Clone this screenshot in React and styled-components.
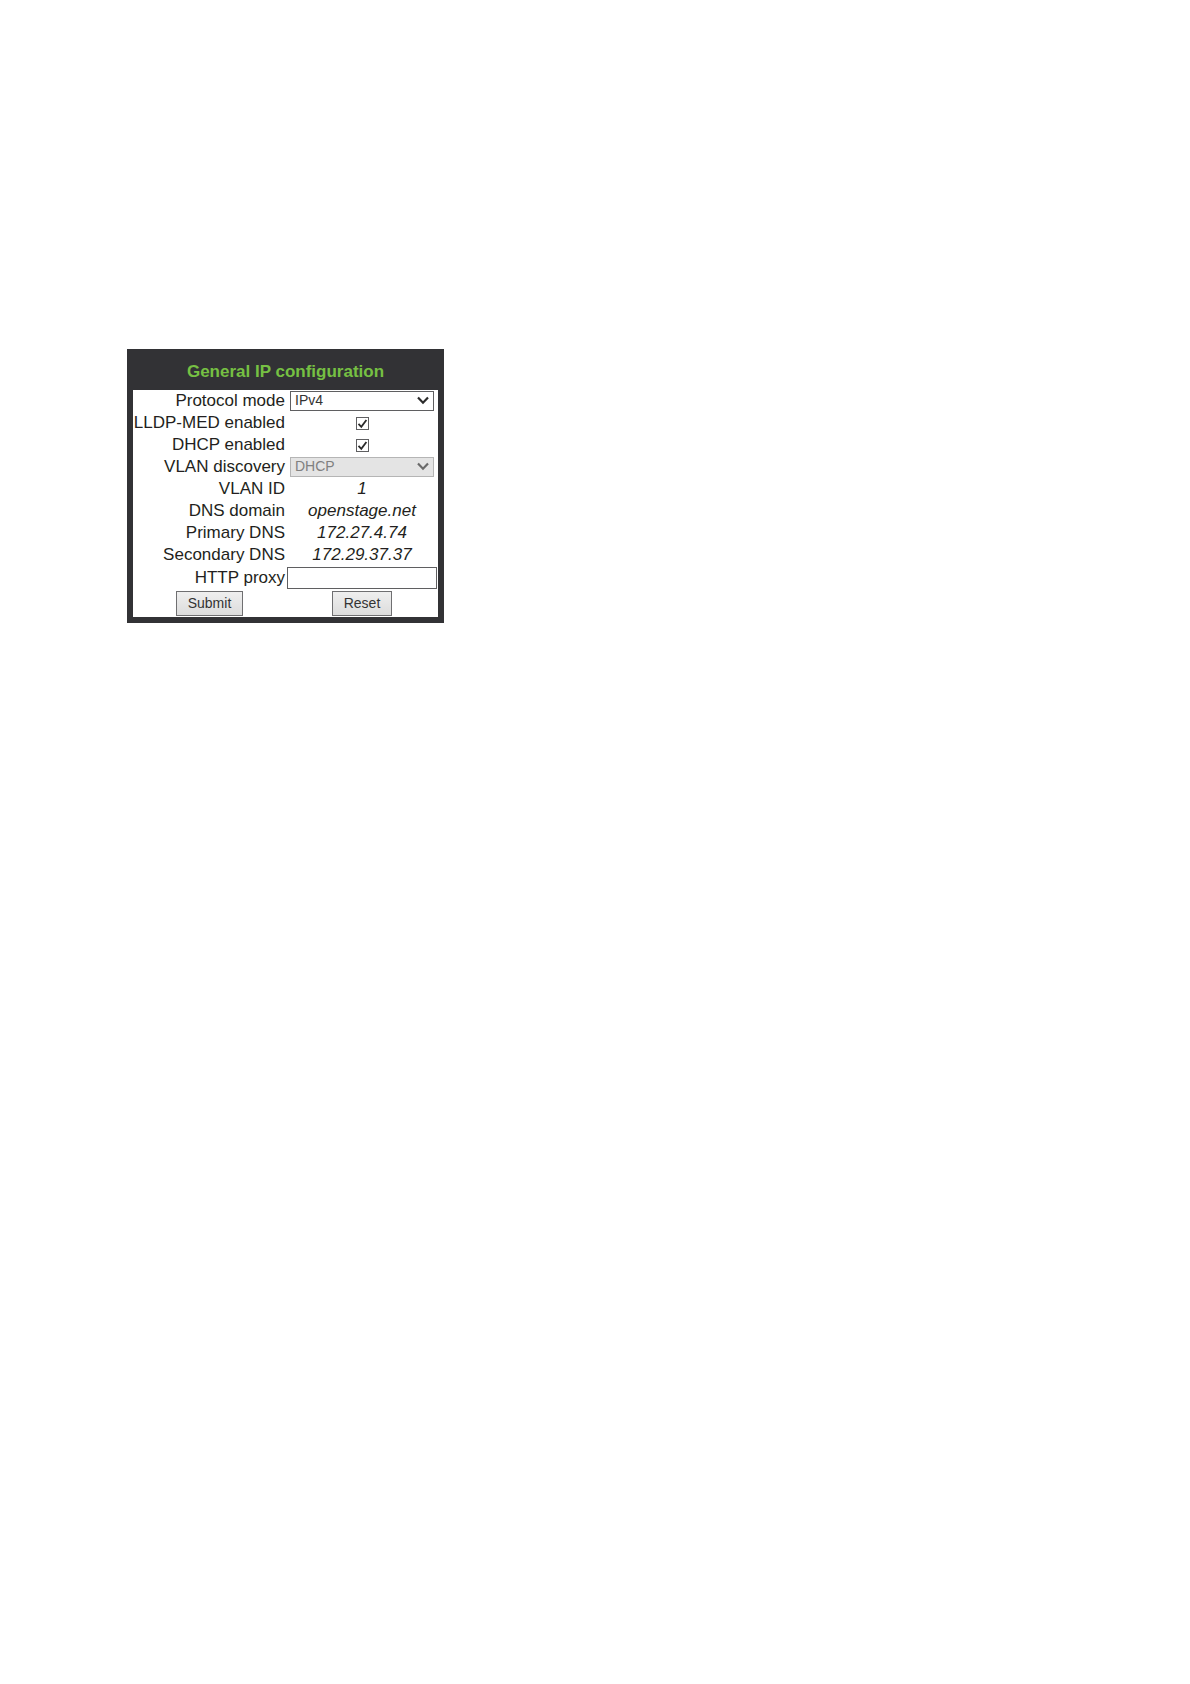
import React from 'react'
import styled, { createGlobalStyle } from 'styled-components';

const GlobalStyle = createGlobalStyle`
    body {
        margin: 0;
        background-color: #FFFFFF;
    }
    * {
        box-sizing: border-box;
    }
`;

const Page = styled.main`
    display: flex;
    align-items: flex-start;
    padding: 349px 127px;
    font-family: Arial, "Liberation Sans", sans-serif;
    font-size: 17px;
    line-height: 22px;
    color: #231F20;
`;

const Panel = styled.section`
    border: 6px solid #323235;
    background-color: #323235;
`;

const Title = styled.h1`
    margin: 0;
    padding-bottom: 2px;
    font-size: 17px;
    font-weight: 700;
    line-height: 33px;
    text-align: center;
    color: #76C043;
`;

const Form = styled.form`
    background-color: #FFFFFF;
`;

const Row = styled.div`
    display: grid;
    grid-template-columns: 153px 152px;
    align-items: center;
    min-height: ${props => props.$height || 22}px;
`;

const Label = styled.label`
    padding-right: 1px;
    text-align: right;
    white-space: nowrap;
`;

const Cell = styled.div`
    display: flex;
    align-items: center;
    justify-content: center;
`;

const Value = styled.output`
    font-style: italic;
`;

const SelectWrap = styled.div`
    position: relative;
    display: flex;
    width: 144px;
`;

const SelectBox = styled.select`
    appearance: none;
    width: 100%;
    height: 20px;
    padding: 0 20px 2px 4px;
    border: 1px solid #5F5F61;
    border-radius: 0;
    background-color: #FFFFFF;
    font-family: inherit;
    font-size: 14px;
    line-height: 16px;
    color: #333333;
    &:disabled {
        border-color: #B5B5B5;
        background-color: #E4E4E4;
        color: #808080;
        opacity: 1;
    }
`;

const Arrow = styled.svg`
    position: absolute;
    top: 5px;
    right: 5px;
    width: 12px;
    height: 9px;
    pointer-events: none;
    fill: none;
    stroke: ${props => props.$muted ? '#6A6A6A' : '#2B2B2B'};
    stroke-width: 2.2;
`;

const CheckWrap = styled.span`
    position: relative;
    display: flex;
`;

const CheckInput = styled.input`
    appearance: none;
    width: 13px;
    height: 13px;
    margin: 0;
    border: 1px solid #5F5F61;
    background-color: #FFFFFF;
    &:checked + svg {
        display: block;
    }
`;

const Tick = styled.svg`
    position: absolute;
    top: 0;
    left: 0;
    display: none;
    pointer-events: none;
    fill: none;
    stroke: #2B2B2B;
    stroke-width: 1.8;
`;

const TextInput = styled.input`
    width: 150px;
    height: 22px;
    padding: 0 4px;
    border: 1px solid #5F5F61;
    font-family: inherit;
    font-size: 14px;
`;

const Button = styled.button`
    height: 25px;
    padding: 0 11px 2px;
    border: 1px solid #6F6F71;
    background: linear-gradient(#EFEFEF, #DCDCDC);
    font-family: inherit;
    font-size: 14px;
    color: #333333;
`;

const Select = ({ id, options, disabled }) => {
    return (
        <SelectWrap>
            <SelectBox id={id} disabled={disabled}>
                {options.map(option => <option key={option}>{option}</option>)}
            </SelectBox>
            <Arrow viewBox="0 0 12 9" $muted={disabled} aria-hidden="true">
                <path d="M1 1.5L6 6.7L11 1.5" />
            </Arrow>
        </SelectWrap>
    )
}

const Checkbox = ({ id }) => {
    return (
        <CheckWrap>
            <CheckInput type="checkbox" id={id} defaultChecked />
            <Tick width="13" height="13" viewBox="0 0 13 13" aria-hidden="true">
                <path d="M2.5 6.8L5.3 9.8L10.4 3" />
            </Tick>
        </CheckWrap>
    )
}

const Field = ({ id, label, height, children }) => {
    return (
        <Row $height={height}>
            <Label htmlFor={id}>{label}</Label>
            <Cell>{children}</Cell>
        </Row>
    )
}

const values = [
    { id: 'vlan-id', label: 'VLAN ID', value: '1' },
    { id: 'dns-domain', label: 'DNS domain', value: 'openstage.net' },
    { id: 'primary-dns', label: 'Primary DNS', value: '172.27.4.74' },
    { id: 'secondary-dns', label: 'Secondary DNS', value: '172.29.37.37' },
];

const App = () => {
    return (
        <Page>
            <GlobalStyle/>
            <Panel>
                <Title>General IP configuration</Title>
                <Form onSubmit={e => e.preventDefault()}>
                    <Field id="protocol-mode" label="Protocol mode">
                        <Select id="protocol-mode" options={['IPv4']} />
                    </Field>
                    <Field id="lldp-med" label="LLDP-MED enabled">
                        <Checkbox id="lldp-med" />
                    </Field>
                    <Field id="dhcp" label="DHCP enabled">
                        <Checkbox id="dhcp" />
                    </Field>
                    <Field id="vlan-discovery" label="VLAN discovery">
                        <Select id="vlan-discovery" options={['DHCP']} disabled />
                    </Field>
                    {values.map(item => (
                        <Field key={item.id} id={item.id} label={item.label}>
                            <Value id={item.id}>{item.value}</Value>
                        </Field>
                    ))}
                    <Field id="http-proxy" label="HTTP proxy" height={24}>
                        <TextInput type="text" id="http-proxy" />
                    </Field>
                    <Row $height={27}>
                        <Cell><Button type="submit">Submit</Button></Cell>
                        <Cell><Button type="reset">Reset</Button></Cell>
                    </Row>
                </Form>
            </Panel>
        </Page>
    )
}

export default App
